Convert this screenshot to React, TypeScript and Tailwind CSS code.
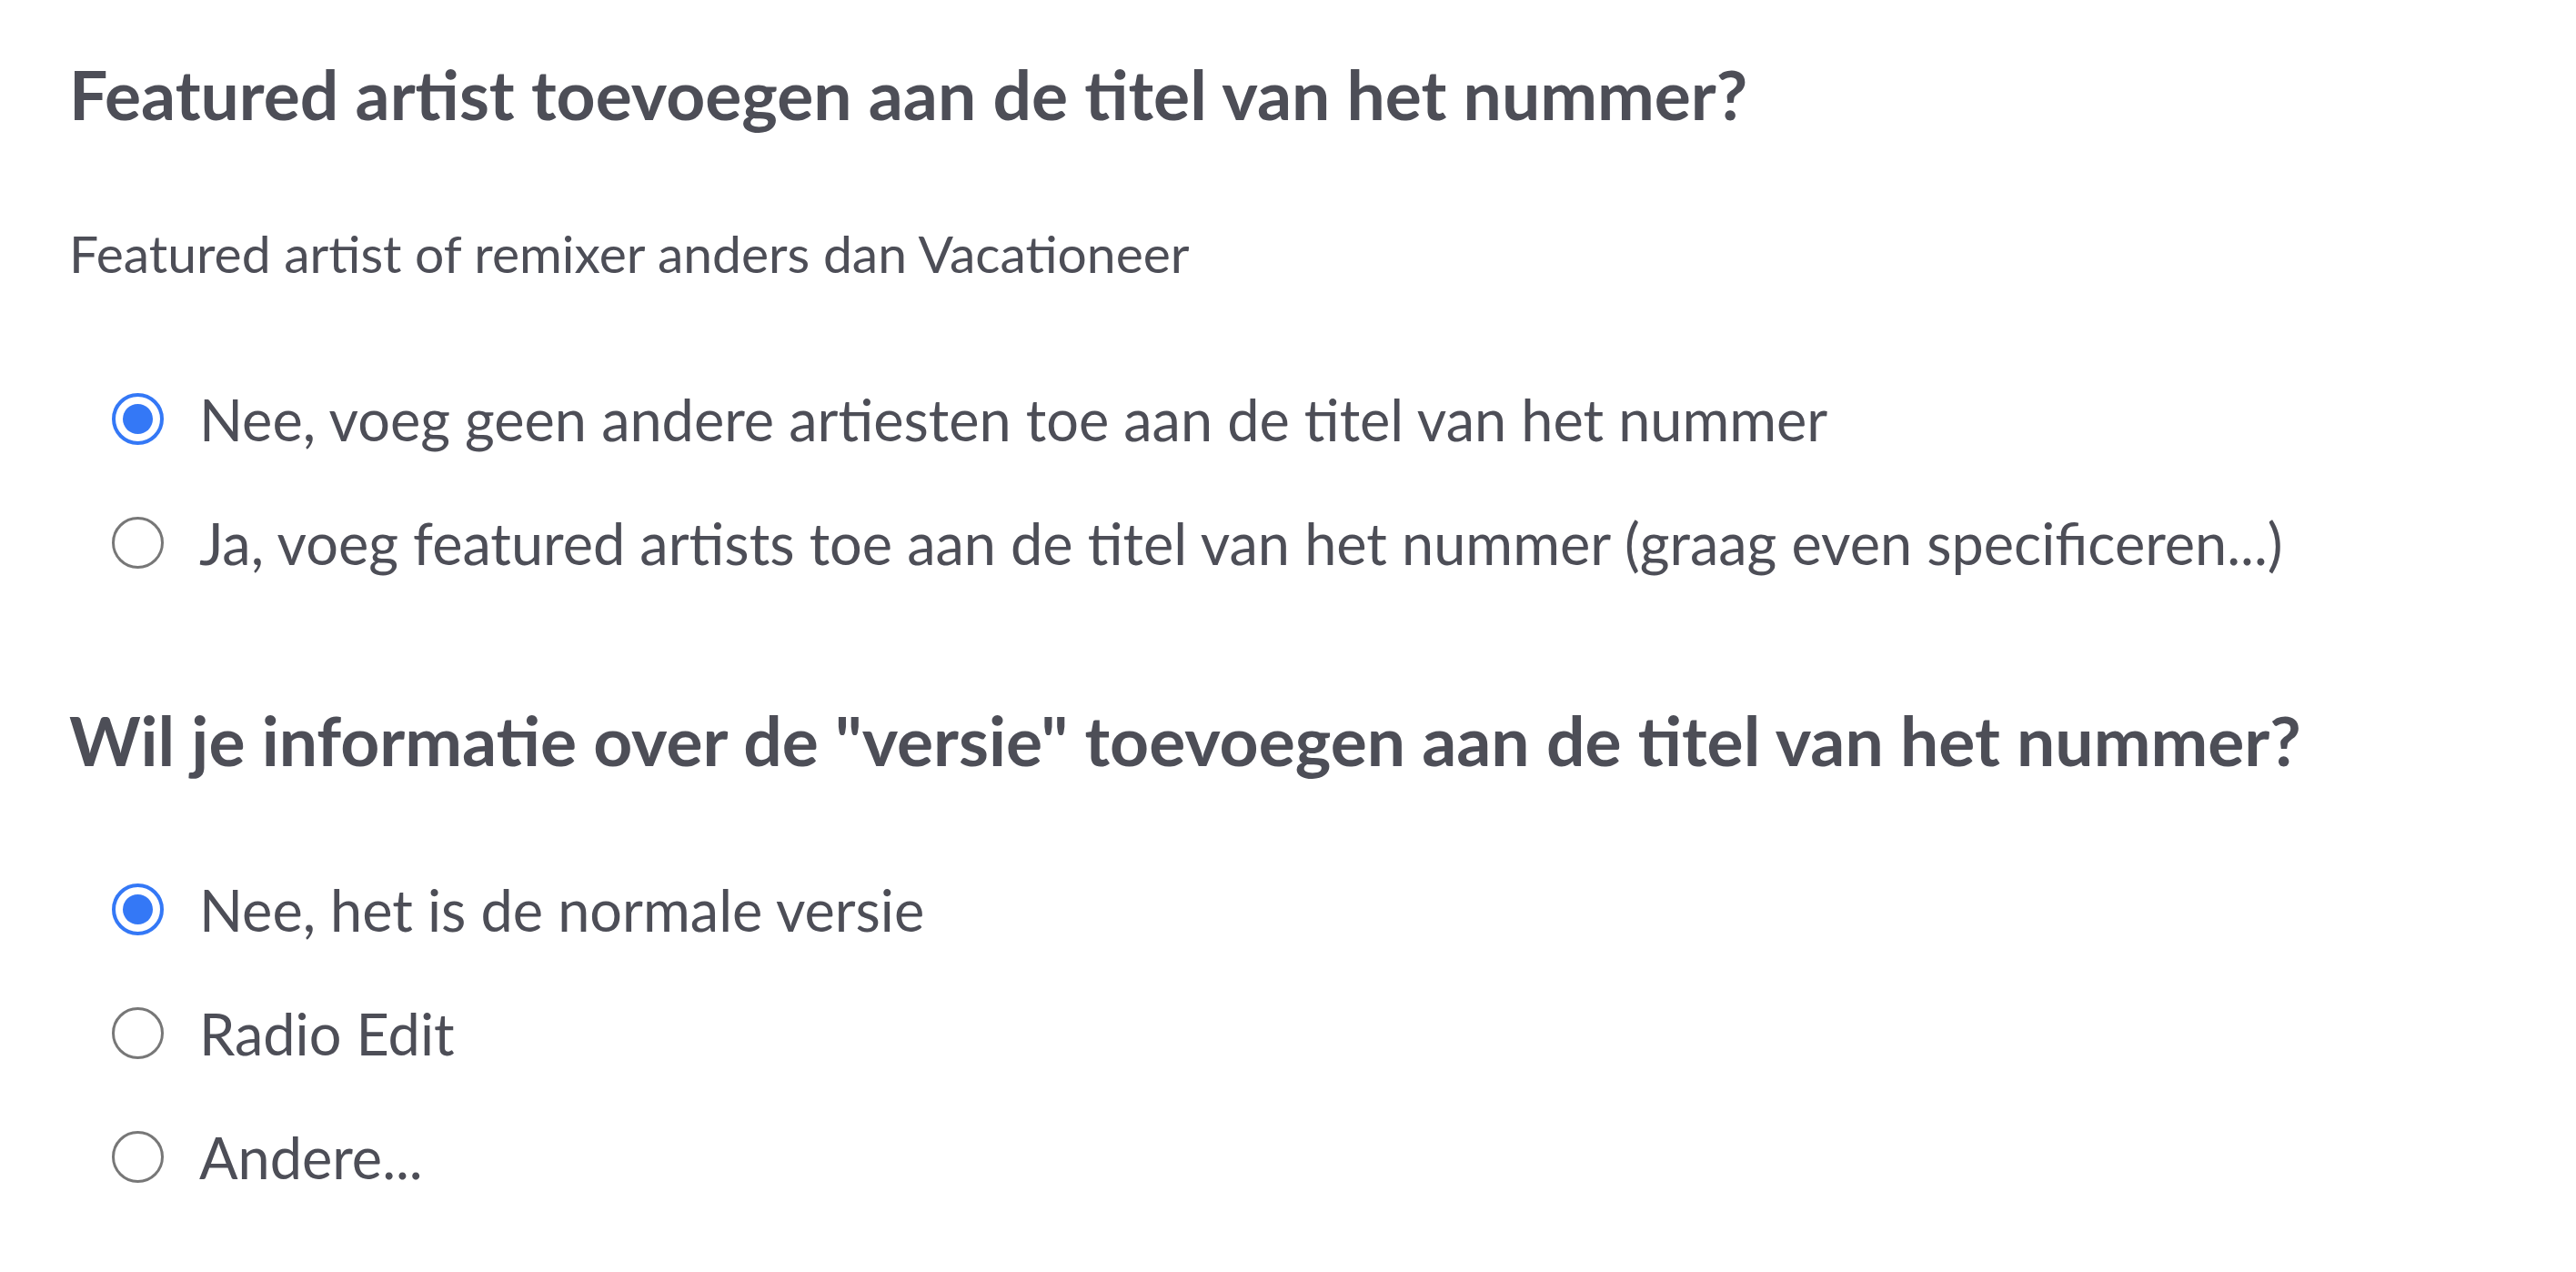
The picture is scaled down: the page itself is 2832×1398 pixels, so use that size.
import React, { useState } from 'react';

type Option = { id: string; label: string };

const artistOptions: Option[] = [
  { id: 'no', label: 'Nee, voeg geen andere artiesten toe aan de titel van het nummer' },
  { id: 'yes', label: 'Ja, voeg featured artists toe aan de titel van het nummer (graag even specificeren...)' },
];

const versionOptions: Option[] = [
  { id: 'normal', label: 'Nee, het is de normale versie' },
  { id: 'radio', label: 'Radio Edit' },
  { id: 'other', label: 'Andere...' },
];

const RadioDot: React.FC<{ checked: boolean }> = ({ checked }) =>
  checked ? (
    <span className="w-[57px] h-[57px] shrink-0 rounded-full border-[4px] border-[#3478f6] flex items-center justify-center">
      <span className="w-[33px] h-[33px] rounded-full bg-[#3478f6]" />
    </span>
  ) : (
    <span className="w-[57px] h-[57px] shrink-0 rounded-full border-[3px] border-[#777777]" />
  );

const RadioGroup: React.FC<{
  options: Option[];
  value: string;
  onChange: (id: string) => void;
}> = ({ options, value, onChange }) => (
  <div className="flex flex-col">
    {options.map((o) => (
      <label
        key={o.id}
        className="h-[136px] flex items-center gap-[39px] pl-[47px] cursor-pointer"
        onClick={() => onChange(o.id)}
      >
        <RadioDot checked={value === o.id} />
        <span className="text-[63px] leading-[1.2] whitespace-nowrap">{o.label}</span>
      </label>
    ))}
  </div>
);

export default function App() {
  const [artist, setArtist] = useState('no');
  const [version, setVersion] = useState('normal');

  return (
    <div
      className="min-h-screen bg-white text-[#4d4e57] pl-[76px] pt-[58px]"
      style={{ fontFamily: 'Lato, "Noto Sans", sans-serif' }}
    >
      <h2 className="text-[75px] font-bold leading-[1.2] whitespace-nowrap">
        Featured artist toevoegen aan de titel van het nummer?
      </h2>
      <p className="mt-[96px] text-[57px] leading-[1.2] whitespace-nowrap">
        Featured artist of remixer anders dan Vacationeer
      </p>
      <div className="mt-[80px]">
        <RadioGroup options={artistOptions} value={artist} onChange={setArtist} />
      </div>
      <h2 className="mt-[104px] text-[75px] font-bold leading-[1.2] whitespace-nowrap">
        Wil je informatie over de "versie" toevoegen aan de titel van het nummer?
      </h2>
      <div className="mt-[73px]">
        <RadioGroup options={versionOptions} value={version} onChange={setVersion} />
      </div>
    </div>
  );
}
